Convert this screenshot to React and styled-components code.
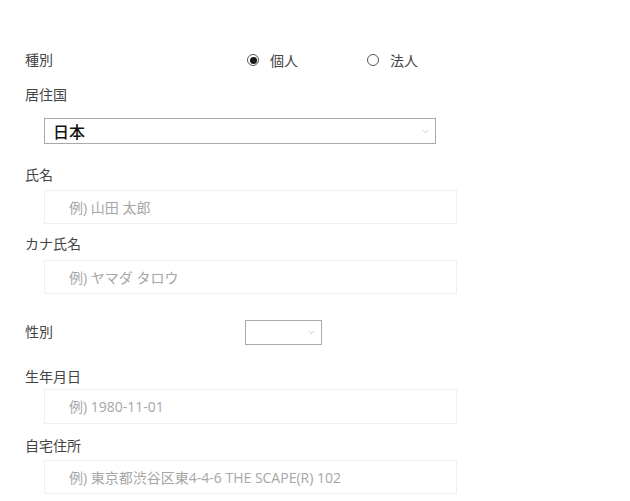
import React, {useState} from 'react'
import styled, {createGlobalStyle} from 'styled-components'
import {ChevronDown} from 'lucide-react'

const GlobalStyle = createGlobalStyle`
body {
  margin: 0;
  background: #fff;
  font-family: "Open Sans", "Noto Sans CJK JP", sans-serif;
  color: #333;
}
`

const App = () => {
  const [kind, setKind] = useState("personal")

  return (
    <>
      <GlobalStyle/>
      <Form>
        <Row $mt={48}>
          <Label $width={222}>種別</Label>
          <RadioGroup>
            <Option onClick={() => setKind("personal")}>
              <Radio $checked={kind === "personal"}/>
              <OptionText>個人</OptionText>
            </Option>
            <Option onClick={() => setKind("corporate")}>
              <Radio $checked={kind === "corporate"}/>
              <OptionText>法人</OptionText>
            </Option>
          </RadioGroup>
        </Row>
        <Row $mt={11}>
          <Label>居住国</Label>
        </Row>
        <SelectBox $width={392} $height={26} $mt={11} $ml={19}>
          <SelectValue>日本</SelectValue>
          <ChevronDown size={9} strokeWidth={1.4} color="#999"/>
        </SelectBox>

        <Label $mt={20}>氏名</Label>
        <Input $mt={4} placeholder="例) 山田 太郎"/>

        <Label $mt={9}>カナ氏名</Label>
        <Input $mt={5} placeholder="例) ヤマダ タロウ"/>

        <Row $mt={26}>
          <Label $width={220}>性別</Label>
          <SelectBox $width={77} $height={25}>
            <SelectValue/>
            <ChevronDown size={9} strokeWidth={1.4} color="#999"/>
          </SelectBox>
        </Row>

        <Label $mt={22}>生年月日</Label>
        <Input $mt={1} $height={35} placeholder="例) 1980-11-01"/>

        <Label $mt={11}>自宅住所</Label>
        <Input $mt={3} placeholder="例) 東京都渋谷区東4-4-6 THE SCAPE(R) 102"/>
      </Form>
    </>
  )
}

export default App

const Form = styled.div`
display: flex;
flex-direction: column;
align-items: flex-start;
padding-left: 25px;
width: 605px;
`
const Row = styled.div`
display: flex;
align-items: center;
height: 24px;
margin-top: ${p => p.$mt || 0}px;
`
const Label = styled.div`
font-size: 14px;
line-height: 22px;
color: #444;
width: ${p => p.$width ? p.$width + "px" : "auto"};
margin-top: ${p => p.$mt || 0}px;
`
const RadioGroup = styled.div`
display: flex;
align-items: center;
`
const Option = styled.label`
display: flex;
align-items: center;
gap: 11px;
width: 120px;
cursor: pointer;
`
const Radio = styled.span`
box-sizing: border-box;
width: 12px;
height: 12px;
border-radius: 50%;
border: 1px solid #555;
display: flex;
align-items: center;
justify-content: center;
&::after {
  content: "";
  width: 7px;
  height: 7px;
  border-radius: 50%;
  background: #1a1a1a;
  display: ${p => p.$checked ? "block" : "none"};
}
`
const OptionText = styled.span`
font-size: 14px;
color: #444;
`
const SelectBox = styled.div`
box-sizing: border-box;
display: flex;
align-items: center;
justify-content: space-between;
width: ${p => p.$width}px;
height: ${p => p.$height}px;
margin-top: ${p => p.$mt || 0}px;
margin-left: ${p => p.$ml || 0}px;
padding: 0 5px 0 8px;
border: 1px solid #a9a9a9;
background: #fff;
`
const SelectValue = styled.span`
font-size: 16px;
font-weight: 500;
color: #111;
`
const Input = styled.input`
box-sizing: border-box;
width: 413px;
height: ${p => p.$height || 34}px;
margin-top: ${p => p.$mt || 0}px;
margin-left: 19px;
padding: 0 0 0 24px;
border: 1px solid #f0f0f0;
outline: none;
font-family: "Open Sans", "Noto Sans CJK JP", sans-serif;
font-size: 14px;
color: #333;
&::placeholder {
  color: #a6a6a6;
}
`
